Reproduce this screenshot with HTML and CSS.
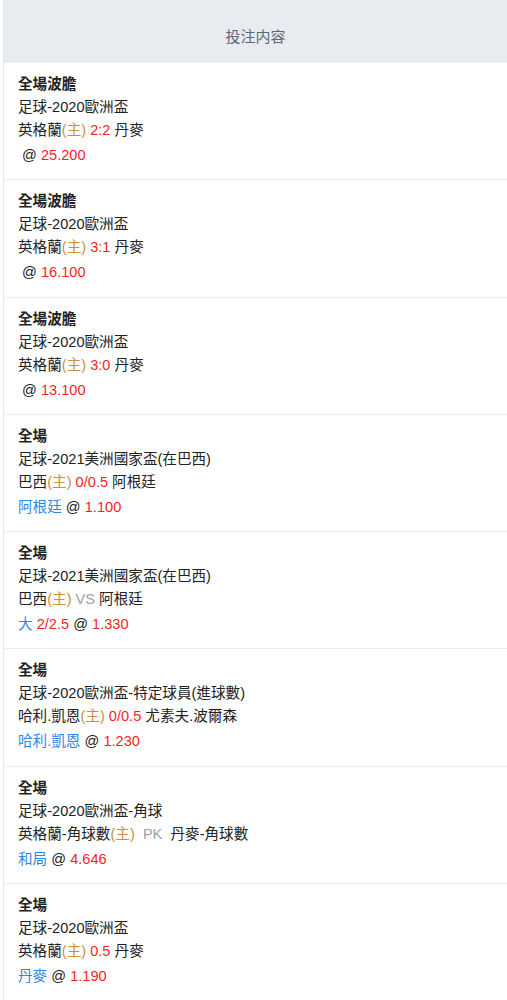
FILE: index.html
```html
<!DOCTYPE html>
<html lang="zh-Hant">
<head>
    <meta charset="UTF-8">
    <meta name="viewport" content="width=device-width, initial-scale=1.0">
    <title>投注內容</title>
    <link rel="stylesheet" href="styles.css">
</head>
<body>
    <div class="bet-table">
        <div class="bet-header">投注内容</div>

        <div class="bet-row">
            <div class="bet-type">全場波膽</div>
            <div>足球-2020歐洲盃</div>
            <div>英格蘭<span class="home">(主)</span> <span class="red">2:2</span> 丹麥</div>
            <div class="bet-odds">&nbsp;@ <span class="red">25.200</span></div>
        </div>

        <div class="bet-row">
            <div class="bet-type">全場波膽</div>
            <div>足球-2020歐洲盃</div>
            <div>英格蘭<span class="home">(主)</span> <span class="red">3:1</span> 丹麥</div>
            <div class="bet-odds">&nbsp;@ <span class="red">16.100</span></div>
        </div>

        <div class="bet-row">
            <div class="bet-type">全場波膽</div>
            <div>足球-2020歐洲盃</div>
            <div>英格蘭<span class="home">(主)</span> <span class="red">3:0</span> 丹麥</div>
            <div class="bet-odds">&nbsp;@ <span class="red">13.100</span></div>
        </div>

        <div class="bet-row">
            <div class="bet-type">全場</div>
            <div>足球-2021美洲國家盃(在巴西)</div>
            <div>巴西<span class="home">(主)</span> <span class="red">0/0.5</span> 阿根廷</div>
            <div class="bet-odds"><span class="blue">阿根廷</span> @ <span class="red">1.100</span></div>
        </div>

        <div class="bet-row">
            <div class="bet-type">全場</div>
            <div>足球-2021美洲國家盃(在巴西)</div>
            <div>巴西<span class="home">(主)</span> <span class="gray">VS</span> 阿根廷</div>
            <div class="bet-odds"><span class="blue">大</span> <span class="red">2/2.5</span> @ <span class="red">1.330</span></div>
        </div>

        <div class="bet-row">
            <div class="bet-type">全場</div>
            <div>足球-2020歐洲盃-特定球員(進球數)</div>
            <div>哈利.凱恩<span class="home">(主)</span> <span class="red">0/0.5</span> 尤素夫.波爾森</div>
            <div class="bet-odds"><span class="blue">哈利.凱恩</span> @ <span class="red">1.230</span></div>
        </div>

        <div class="bet-row">
            <div class="bet-type">全場</div>
            <div>足球-2020歐洲盃-角球</div>
            <div>英格蘭-角球數<span class="home">(主)</span> &nbsp;<span class="gray">PK</span> &nbsp;丹麥-角球數</div>
            <div class="bet-odds"><span class="blue">和局</span> @ <span class="red">4.646</span></div>
        </div>

        <div class="bet-row">
            <div class="bet-type">全場</div>
            <div>足球-2020歐洲盃</div>
            <div>英格蘭<span class="home">(主)</span> <span class="red">0.5</span> 丹麥</div>
            <div class="bet-odds"><span class="blue">丹麥</span> @ <span class="red">1.190</span></div>
        </div>
    </div>
</body>
</html>
```

FILE: styles.css
```css
/* Page */
body, html {
    margin: 0;
    background: #ffffff;
    font-family: "Liberation Sans", "Noto Sans CJK TC", sans-serif;
    font-size: 14.6px;
    color: #222222;
}

/* Table */
.bet-table {
    margin-left: 3px;
    border-left: 1px solid #e4e7ec;
}

.bet-header {
    height: 63px;
    line-height: 74px;
    background: #e8ebef;
    color: #5c6675;
    font-size: 15px;
    text-align: center;
}

.bet-row {
    height: 117.3px;
    box-sizing: border-box;
    padding: 10px 14px 0;
    line-height: 23px;
    border-bottom: 1px solid #ebedf0;
}

.bet-type {
    font-weight: bold;
}

.bet-odds {
    margin-top: 2px;
}

/* Text colours */
.home {
    color: #c8913a;
}

.red {
    color: #f51f26;
}

.blue {
    color: #2f86ea;
}

.gray {
    color: #a0a0a0;
}
```
